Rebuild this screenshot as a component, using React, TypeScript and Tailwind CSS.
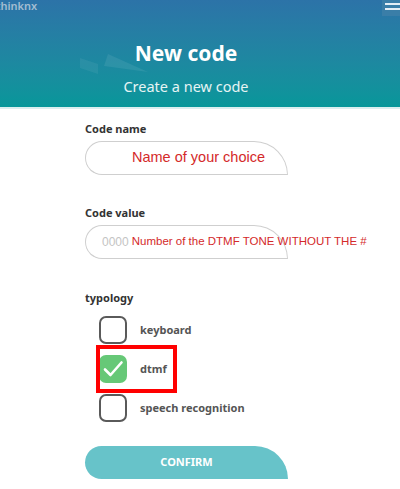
import { useState } from "react";

const ui = { fontFamily: '"Noto Sans", "Open Sans", sans-serif' };
const note = { fontFamily: '"Liberation Sans", Arial, sans-serif' };

type Option = { id: string; label: string };

const options: Option[] = [
  { id: "keyboard", label: "keyboard" },
  { id: "dtmf", label: "dtmf" },
  { id: "speech", label: "speech recognition" },
];

function Check({ checked }: { checked: boolean }) {
  if (!checked) {
    return <span className="block h-[28px] w-[28px] rounded-[7px] border-2 border-[#5a5a5a] bg-white" />;
  }
  return (
    <span className="flex h-[28px] w-[28px] items-center justify-center rounded-[7px] bg-[#66c877]">
      <svg width="22" height="22" viewBox="0 0 22 22" fill="none">
        <path d="M3 11.5l5.5 5.5L19.5 4.5" stroke="white" strokeWidth="2.6" strokeLinecap="round" strokeLinejoin="round" />
      </svg>
    </span>
  );
}

export default function App() {
  const [typology, setTypology] = useState("dtmf");

  return (
    <div className="h-[489px] w-[400px] overflow-hidden bg-white" style={ui}>
      <header className="relative flex h-[107px] flex-col items-center bg-gradient-to-b from-[#2c73a8] to-[#06979a] pr-[28px]">
        <span className="absolute -left-[4px] -top-[2px] text-[11px] font-semibold text-[#a3bdd2]">thinknx</span>
        <span className="absolute right-0 top-0 flex h-[16px] w-[18px] flex-col items-end gap-[3px] bg-[#3a7ea8] pt-[3px]">
          <span className="h-[2px] w-[15px] bg-[#e3eef5]" />
          <span className="h-[2px] w-[15px] bg-[#e3eef5]" />
        </span>
        <svg className="absolute left-[78px] top-[50px]" width="80" height="30" viewBox="0 0 80 30" fill="none">
          <path d="M2 8l18 6v10L2 18z" fill="#ffffff" fillOpacity="0.06" />
          <path d="M30 4l40 18-44-6z" fill="#ffffff" fillOpacity="0.08" />
        </svg>
        <h1 className="mt-[39px] text-[21px] font-bold leading-[28px] text-white">New code</h1>
        <p className="mt-[9px] text-[14.5px] leading-[20px] text-[#e6f4f4]">Create a new code</p>
      </header>
      <div className="h-[2px] bg-[#d9efef]" />

      <form className="pl-[85px]">
        <label className="mt-[11px] block text-[11px] font-bold leading-[18px] text-[#333]">Code name</label>
        <div className="mt-[3px] flex h-[34px] w-[203px] items-center rounded-l-[17px] rounded-tr-[34px] border border-[#cfcfcf] pl-[46px]">
          <span className="text-[14.5px] text-[#d42a2a]" style={note}>Name of your choice</span>
        </div>

        <label className="mt-[29px] block text-[11px] font-bold leading-[18px] text-[#333]">Code value</label>
        <div className="mt-[3px] flex h-[34px] w-[203px] items-center whitespace-nowrap rounded-l-[17px] rounded-tr-[34px] border border-[#cfcfcf] pl-[16px]">
          <span className="text-[12px] text-[#c4c4c4]" style={note}>0000</span>
          <span className="ml-[3px] text-[11.5px] text-[#d42a2a]" style={note}>Number of the DTMF TONE WITHOUT THE #</span>
        </div>

        <label className="mt-[30px] block text-[11px] font-bold leading-[18px] text-[#333]">typology</label>
        <div className="mt-[9px] flex flex-col gap-[11px] pl-[14px]">
          {options.map((o) => (
            <div key={o.id} className="relative flex items-center gap-[13px]" onClick={() => setTypology(o.id)}>
              <Check checked={typology === o.id} />
              <span className="text-[11px] font-bold text-[#555]">{o.label}</span>
              {o.id === "dtmf" && (
                <span className="absolute -left-[3px] -top-[10px] h-[48px] w-[81px] border-4 border-[#ff0000]" />
              )}
            </div>
          ))}
        </div>

        <button
          type="button"
          className="mt-[24px] flex h-[33px] w-[203px] items-center justify-center rounded-l-[17px] rounded-tr-[34px] bg-[#67c3c9] text-[11px] font-bold text-white"
        >
          CONFIRM
        </button>
      </form>
    </div>
  );
}
